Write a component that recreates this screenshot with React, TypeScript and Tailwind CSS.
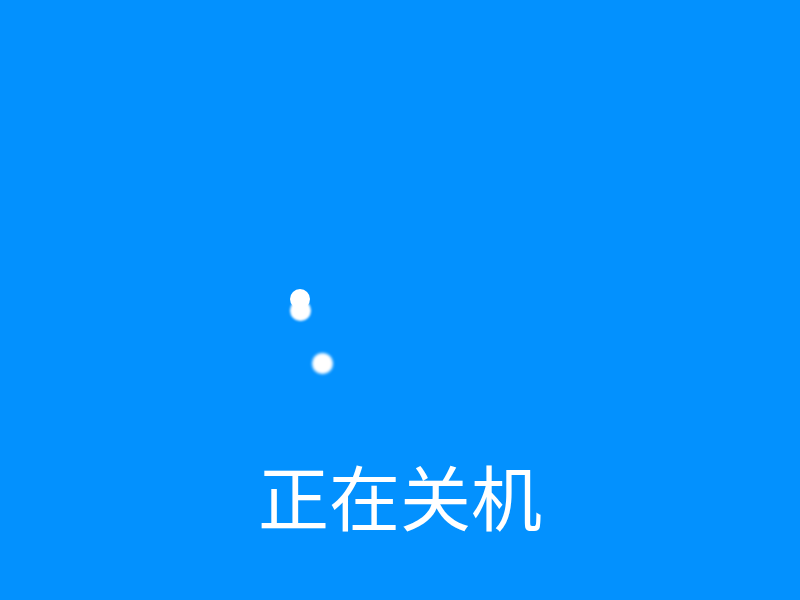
import React from "react";

export default function App() {
  return (
    <div className="relative w-[800px] h-[600px] bg-[#0391fe] overflow-hidden flex flex-col items-center">
      <div className="absolute left-[290px] top-[289px] w-[20px] h-[20px] rounded-full bg-white" />
      <div className="absolute left-[290px] top-[300px] w-[21px] h-[21px] rounded-full bg-white blur-[1px]" />
      <div className="absolute left-[312px] top-[353px] w-[21px] h-[21px] rounded-full bg-white blur-[1.5px]" />
      <div
        className="mt-[446px] text-white text-[71px] leading-[96px]"
        style={{ fontFamily: '"Noto Sans CJK SC", "Noto Sans", sans-serif' }}
      >
        正在关机
      </div>
    </div>
  );
}
